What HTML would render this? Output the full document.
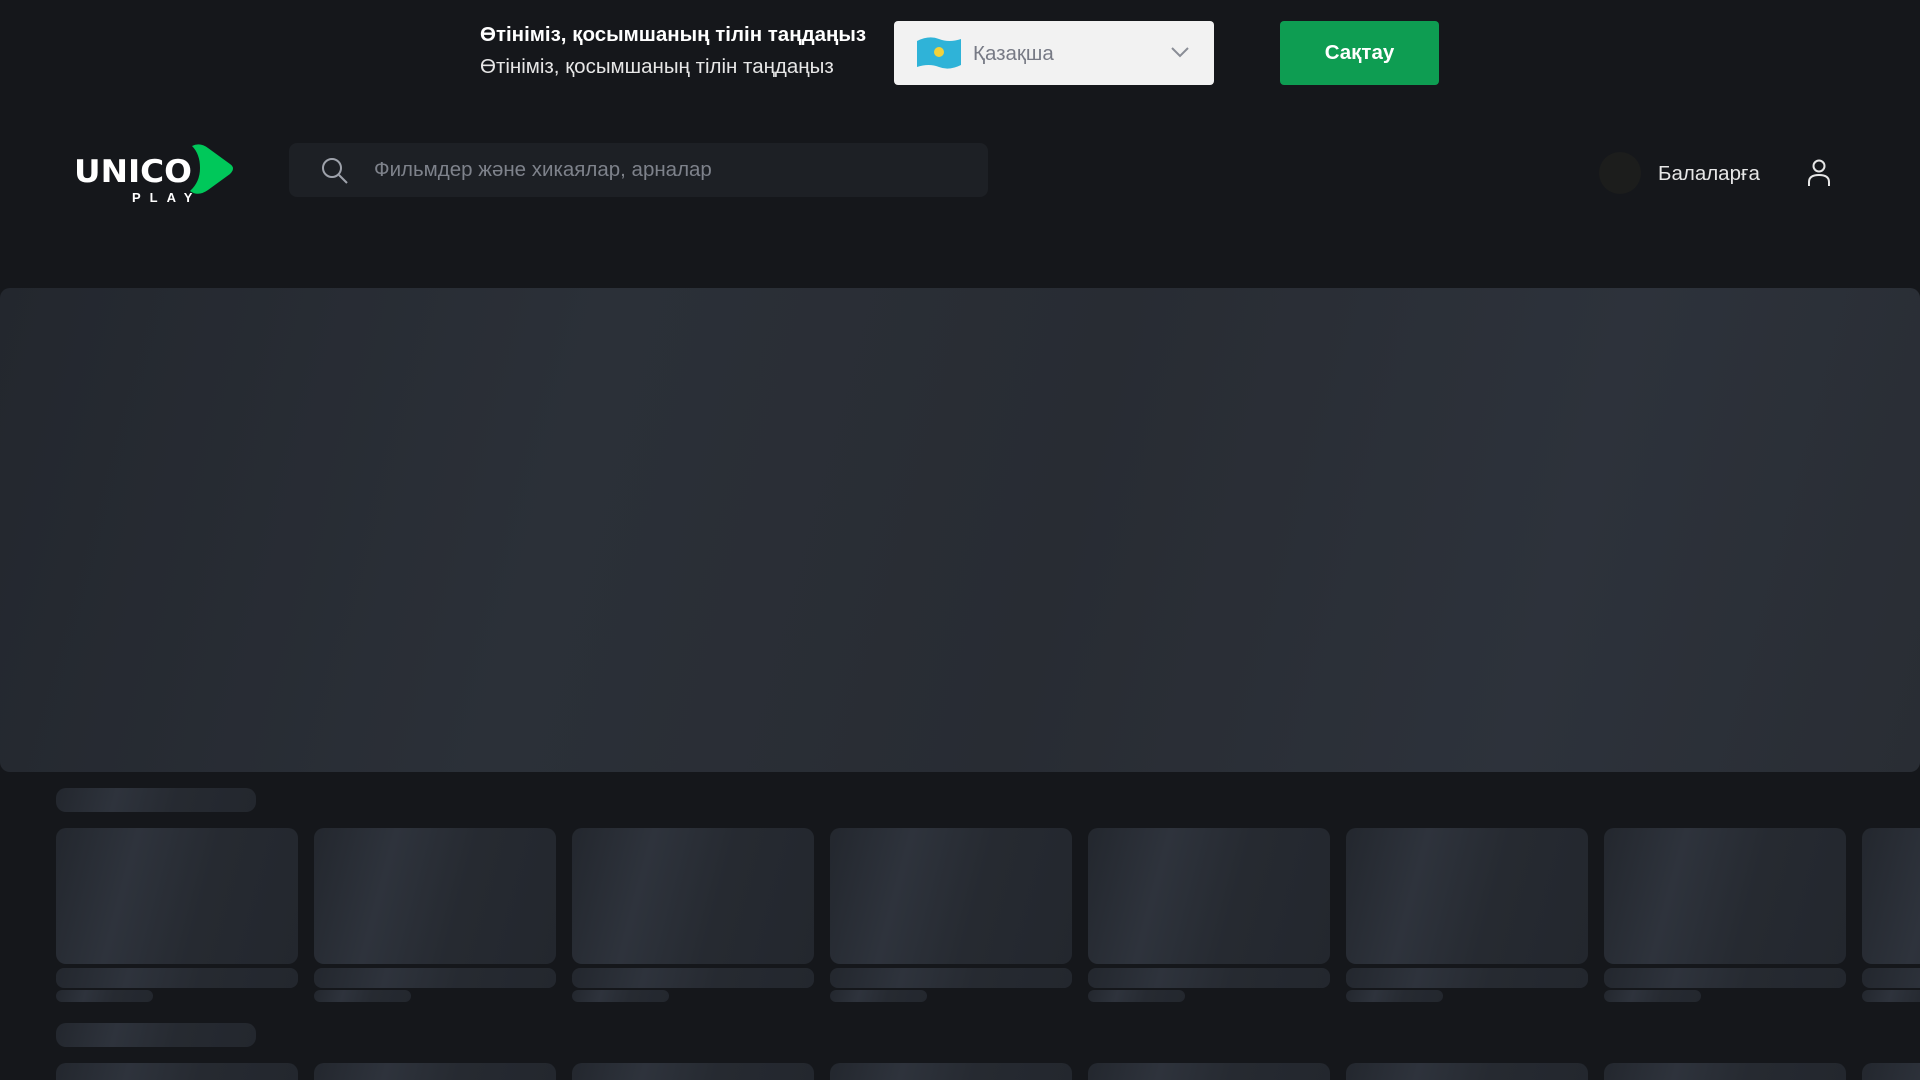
<!DOCTYPE html>
<html><head><meta charset="utf-8"><style>
*{margin:0;padding:0;box-sizing:border-box}
html{width:1920px;height:1080px;overflow:hidden}
body{width:1920px;height:1080px;background:#15171b;font-family:"Liberation Sans",sans-serif;overflow:hidden;position:relative;color:#fff}
.abs{position:absolute}
.sk{background:linear-gradient(105deg,#23272e 0%,#2e333c 30%,#262a31 60%,#23272e 100%);border-radius:10px}
</style></head><body>
<div class="abs" style="left:480px;top:23px;font-size:20.5px;font-weight:bold;">Өтініміз, қосымшаның тілін таңдаңыз</div>
<div class="abs" style="left:480px;top:55px;font-size:20.5px;color:#e6e6e6">Өтініміз, қосымшаның тілін таңдаңыз</div>
<div class="abs" style="left:894px;top:21px;width:320px;height:64px;background:#f2f2f2;border-radius:4px">
 <svg class="abs" style="left:21px;top:14px" width="48" height="36" viewBox="0 0 48 36"><path d="M2 6 Q14 0 24 4 T46 4 V30 Q34 36 24 32 T2 32Z" fill="#2fb3d8"/><circle cx="24" cy="17" r="5" fill="#f3d23a"/></svg>
 <div class="abs" style="left:79px;top:21px;font-size:20.5px;color:#777a85">Қазақша</div>
 <svg class="abs" style="left:276px;top:24px" width="20" height="14" viewBox="0 0 20 14"><path d="M2 3 L10 11 L18 3" stroke="#8a8d96" stroke-width="2" fill="none"/></svg>
</div>
<div class="abs" style="left:1280px;top:21px;width:159px;height:64px;background:#0e9d52;border-radius:4px;font-size:20.5px;font-weight:bold;text-align:center;line-height:64px">Сақтау</div>
<svg class="abs" style="left:74px;top:144px" width="162" height="60" viewBox="0 0 162 60">
 <path d="M118 2 Q126 -2 134 4 L156 20 Q162 24 156 30 L134 46 Q124 53 116 47 Q126 38 126 24 Q126 10 118 2Z" fill="#00c85a"/>
 <text x="0" y="38" font-family="DejaVu Sans" font-weight="bold" font-size="31" fill="#fff" textLength="118" lengthAdjust="spacingAndGlyphs">UNICO</text>
 <text x="58" y="58" font-family="Liberation Sans" font-weight="bold" font-size="13" fill="#fff" letter-spacing="9">PLAY</text>
</svg>
<div class="abs" style="left:289px;top:143px;width:699px;height:54px;background:#1d2025;border-radius:8px">
 <svg class="abs" style="left:32px;top:14px" width="28" height="28" viewBox="0 0 28 28"><circle cx="11" cy="11" r="9" stroke="#9ea2ab" stroke-width="2" fill="none"/><path d="M18 18 L26 26" stroke="#9ea2ab" stroke-width="2"/></svg>
 <div class="abs" style="left:85px;top:15px;font-size:20.5px;color:#7e828b">Фильмдер және хикаялар, арналар</div>
</div>
<div class="abs" style="left:1599px;top:152px;width:42px;height:42px;border-radius:50%;background:#1c1d1c"></div>
<div class="abs" style="left:1658px;top:162px;font-size:20.5px;color:#e6e6e6">Балаларға</div>
<svg class="abs" style="left:1806px;top:158px" width="26" height="30" viewBox="0 0 26 30"><circle cx="13" cy="8" r="5.5" stroke="#e6e6e6" stroke-width="2" fill="none"/><path d="M3 28 V24 Q3 17 13 17 Q23 17 23 24 V28" stroke="#e6e6e6" stroke-width="2" fill="none"/></svg>
<div class="abs" style="left:0;top:288px;width:1920px;height:484px;border-radius:10px;background:linear-gradient(105deg,#23272e 0%,#2b3038 30%,#282c33 55%,#2d323b 80%,#292d34 100%)"></div>
<div class="abs sk" style="left:56px;top:788px;width:200px;height:24px"></div>
<div class="abs sk" style="left:56px;top:1023px;width:200px;height:24px"></div>
<div id="rows"></div>
<script>
var h='';for(var i=0;i<8;i++){var x=56+i*258;
h+='<div class="abs sk" style="left:'+x+'px;top:828px;width:242px;height:136px"></div>';
h+='<div class="abs sk" style="left:'+x+'px;top:968px;width:242px;height:20px;border-radius:8px"></div>';
h+='<div class="abs sk" style="left:'+x+'px;top:990px;width:97px;height:12px;border-radius:6px"></div>';
h+='<div class="abs sk" style="left:'+x+'px;top:1063px;width:242px;height:17px;border-radius:10px 10px 0 0"></div>';}
document.getElementById('rows').innerHTML=h;
</script>
</body></html>
